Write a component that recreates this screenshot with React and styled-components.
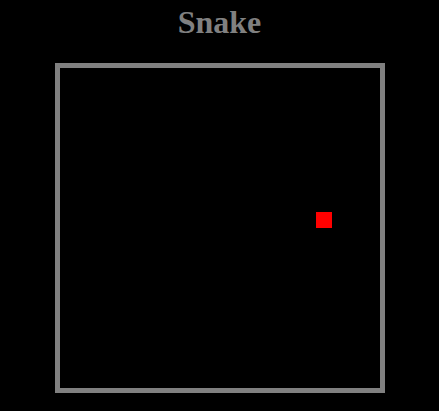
import React from "react";
import styled, { createGlobalStyle } from "styled-components";

const GlobalStyle = createGlobalStyle`
  html, body {
    margin: 0;
    padding: 0;
    background: #000;
  }
`;

const Page = styled.div`
  display: flex;
  flex-direction: column;
  align-items: center;
  padding-top: 4px;
  font-family: "Liberation Serif", "Times New Roman", serif;
`;

const Title = styled.h1`
  margin: 0;
  font-size: 32px;
  line-height: 37px;
  font-weight: bold;
  color: #808080;
`;

const Board = styled.div`
  margin-top: 22px;
  width: 320px;
  height: 320px;
  border: 5px solid #808080;
  display: grid;
  grid-template-columns: repeat(${p => p.size}, 16px);
  grid-template-rows: repeat(${p => p.size}, 16px);
`;

const Cell = styled.div`
  grid-column: ${p => p.x + 1};
  grid-row: ${p => p.y + 1};
  background: ${p => (p.food ? "#ff0000" : "#00c000")};
`;

const food = { x: 16, y: 9 };

export default function App() {
  return (
    <>
      <GlobalStyle />
      <Page>
        <Title>Snake</Title>
        <Board size={20}>
          <Cell food x={food.x} y={food.y} />
        </Board>
      </Page>
    </>
  );
}
